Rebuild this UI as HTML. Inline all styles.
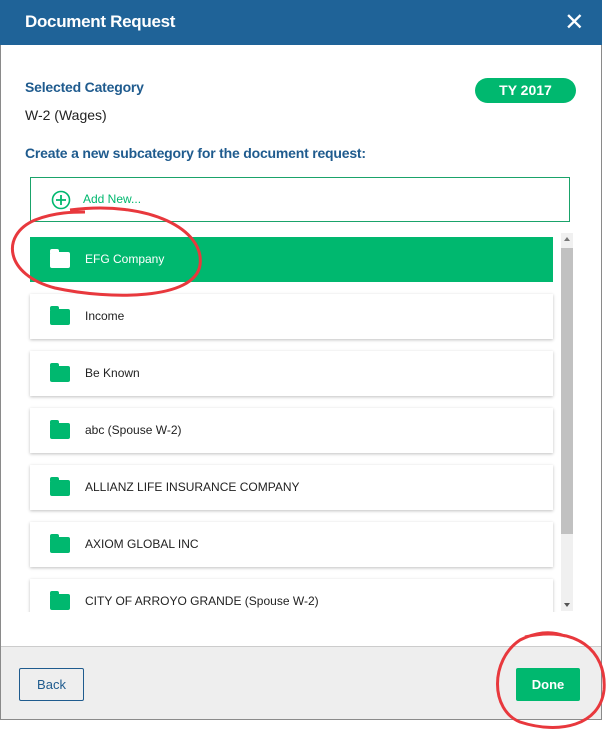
<!DOCTYPE html>
<html><head><style>
*{margin:0;padding:0;box-sizing:border-box}
body{width:610px;height:735px;background:#fff;font-family:"Liberation Sans",sans-serif;position:relative;overflow:hidden}
.dlg{position:absolute;left:0;top:0;width:602px;height:720px;border:1px solid #8a8a8a;border-top:none;background:#fff}
.hd{position:absolute;left:-1px;top:0;width:602px;height:45px;background:#1f6398;color:#fff;font-weight:bold;font-size:17px;padding:12px 0 0 25px;letter-spacing:-0.3px}
.x{position:absolute;right:18px;top:8px;font-size:24px;font-weight:normal}
.lbl{position:absolute;left:24px;color:#1f5b8e;font-weight:bold;font-size:14px;letter-spacing:-0.2px}
.ty{position:absolute;left:474px;top:78px;width:101px;height:25px;border-radius:13px;background:#00b86f;color:#fff;font-weight:bold;font-size:14px;text-align:center;line-height:25px}
.add{position:absolute;left:29px;top:177px;width:540px;height:45px;border:1px solid #1aa36a;color:#00b86f;font-size:12px}
.item{position:absolute;left:29px;width:523px;height:45px;background:#fff;box-shadow:0 1px 3px rgba(0,0,0,.25);font-size:12px;color:#222}
.item .f{position:absolute;left:20px;top:15px;width:20px;height:16px;background:#00b86f;border-radius:2px}
.item .f:before{content:"";position:absolute;left:0;top:-3px;width:9px;height:4px;background:inherit;border-radius:2px 2px 0 0}
.item span{position:absolute;left:55px;top:15px}
.sel{background:#00b86f;color:#fff;box-shadow:none}
.sel .f{background:#fff}
.clip{position:absolute;left:0;top:233px;width:600px;height:379px;overflow:hidden}
.sb{position:absolute;left:560px;top:233px;width:12px;height:378px;background:#f0f0f0}
.thumb{position:absolute;left:560px;top:248px;width:12px;height:286px;background:#c1c1c1}
.ft{position:absolute;left:0;top:646px;width:600px;height:73px;background:#eeeeee;border-top:1px solid #ccc}
.back{position:absolute;left:18px;top:21px;width:65px;height:33px;border:1px solid #1f5b8e;color:#1f5b8e;font-size:13px;text-align:center;line-height:31px;border-radius:2px}
.done{position:absolute;left:515px;top:21px;width:64px;height:33px;background:#00b86f;color:#fff;font-weight:bold;font-size:13px;text-align:center;line-height:33px;border-radius:2px}
</style></head><body>
<div class="dlg">
<div class="hd">Document Request<span class="x">✕</span></div>
<div class="lbl" style="top:79px">Selected Category</div>
<div style="position:absolute;left:24px;top:107px;font-size:14px;color:#222">W-2 (Wages)</div>
<div class="ty">TY 2017</div>
<div class="lbl" style="top:145px">Create a new subcategory for the document request:</div>
<div class="add"><svg style="position:absolute;left:20px;top:12px" width="20" height="20"><circle cx="10" cy="10" r="8.5" fill="none" stroke="#00b86f" stroke-width="1.6"/><path d="M10 5v10M5 10h10" stroke="#00b86f" stroke-width="1.8"/></svg><span style="position:absolute;left:52px;top:14px">Add New...</span></div>
<div class="clip">
<div class="item sel" style="top:4px"><div class="f"></div><span>EFG Company</span></div>
<div class="item" style="top:61px"><div class="f"></div><span>Income</span></div>
<div class="item" style="top:118px"><div class="f"></div><span>Be Known</span></div>
<div class="item" style="top:175px"><div class="f"></div><span>abc (Spouse W-2)</span></div>
<div class="item" style="top:232px"><div class="f"></div><span>ALLIANZ LIFE INSURANCE COMPANY</span></div>
<div class="item" style="top:289px"><div class="f"></div><span>AXIOM GLOBAL INC</span></div>
<div class="item" style="top:346px"><div class="f"></div><span>CITY OF ARROYO GRANDE (Spouse W-2)</span></div>
</div>
<div class="sb"></div><div class="thumb"></div>
<div style="position:absolute;left:563px;top:237px;border:3px solid transparent;border-bottom:4px solid #777;border-top:none;width:0"></div>
<div style="position:absolute;left:563px;top:603px;border:3px solid transparent;border-top:4px solid #555;border-bottom:none;width:0"></div>
<div class="ft"><div class="back">Back</div><div class="done">Done</div></div>
</div>
<svg style="position:absolute;left:0;top:0" width="610" height="735">
<path d="M70 210 C150 200 205 230 200 265 C195 300 110 300 55 288 C5 275 0 235 35 220 C55 212 75 212 85 212" fill="none" stroke="#e8383d" stroke-width="3"/>
<path d="M525 637 C575 625 607 650 604 690 C600 725 560 735 520 722 C490 710 490 660 520 640 C540 630 555 632 565 636" fill="none" stroke="#e8383d" stroke-width="3"/>
</svg>
</body></html>
